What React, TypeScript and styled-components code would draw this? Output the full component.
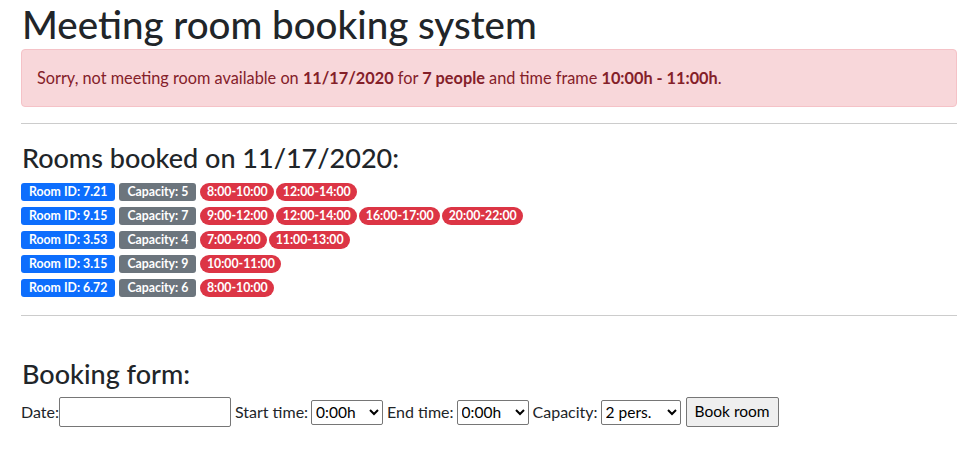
import { FC } from "react";
import styled, { createGlobalStyle } from "styled-components";

const Global = createGlobalStyle`
    body {
        margin: 0;
        font-family: "Lato", "Noto Sans", sans-serif;
        font-size: 16px;
        line-height: 1.5;
        color: #212529;
        background: #fff;
    }
`;

const Page = styled.div`
    padding: 0 13px 0 21px;
`;

const Title = styled.h1`
    margin: 0 0 1px 1px;
    font-size: 38.5px;
    font-weight: 500;
    line-height: 48px;
`;

const Alert = styled.div`
    background: #f8d7da;
    border: 1px solid #f5c2c7;
    color: #842029;
    border-radius: 4px;
    padding: 16px 15px;
    margin-bottom: 16px;
    font-size: 16.3px;
    line-height: 24px;
`;

const Rule = styled.hr`
    margin: 0;
    border: 0;
    border-top: 1px solid #ccc;
`;

const Section = styled.h3<{ $top: number; $bottom: number }>`
    margin: ${p => p.$top}px 0 ${p => p.$bottom}px 1px;
    font-size: 27px;
    font-weight: 500;
    line-height: 34px;
`;

const List = styled.div`
    display: flex;
    flex-direction: column;
    gap: 6px;
    margin-bottom: 18px;
`;

const Row = styled.div`
    display: flex;
    align-items: center;
`;

const Badge = styled.span<{ $bg: string; $pill?: boolean }>`
    display: inline-block;
    background: ${p => p.$bg};
    color: #fff;
    font-size: 12.3px;
    font-weight: 700;
    line-height: 1;
    padding: 3px ${p => (p.$pill ? "6.5px" : "8px")};
    height: 18px;
    box-sizing: border-box;
    border-radius: ${p => (p.$pill ? "9px" : "3px")};
    margin-right: ${p => (p.$pill ? "2px" : "4px")};
`;

const Form = styled.div`
    display: flex;
    align-items: center;
    font-size: 16px;
    white-space: nowrap;
`;

const Label = styled.label`
    margin-left: 4px;
    &:first-child { margin-left: 0; }
`;

const Input = styled.input`
    width: 172px;
    height: 30px;
    box-sizing: border-box;
    border: 1px solid #767676;
    border-radius: 2px;
    font: inherit;
`;

const Select = styled.select<{ $w: number }>`
    width: ${p => p.$w}px;
    height: 25px;
    margin-left: 3px;
    font: inherit;
    font-size: 15.5px;
    border: 1px solid #767676;
    border-radius: 2px;
    background: #fff;
    color: #000;
`;

const Button = styled.button`
    margin-left: 5px;
    height: 30px;
    padding: 0 8px;
    font: inherit;
    font-size: 15.5px;
    background: #efefef;
    border: 1px solid #767676;
    border-radius: 2px;
    color: #000;
`;

const rooms = [
    { id: "7.21", cap: 5, slots: ["8:00-10:00", "12:00-14:00"] },
    { id: "9.15", cap: 7, slots: ["9:00-12:00", "12:00-14:00", "16:00-17:00", "20:00-22:00"] },
    { id: "3.53", cap: 4, slots: ["7:00-9:00", "11:00-13:00"] },
    { id: "3.15", cap: 9, slots: ["10:00-11:00"] },
    { id: "6.72", cap: 6, slots: ["8:00-10:00"] },
];

const App: FC = () => {
    return (
        <Page>
            <Global />
            <Title>Meeting room booking system</Title>
            <Alert>
                Sorry, not meeting room available on <b>11/17/2020</b> for <b>7 people</b> and time frame <b>10:00h - 11:00h</b>.
            </Alert>
            <Rule />
            <Section $top={17} $bottom={8}>Rooms booked on 11/17/2020:</Section>
            <List>
                {rooms.map(r => (
                    <Row key={r.id}>
                        <Badge $bg="#0d6efd">Room ID: {r.id}</Badge>
                        <Badge $bg="#6c757d">Capacity: {r.cap}</Badge>
                        {r.slots.map(s => (
                            <Badge key={s} $bg="#dc3545" $pill>{s}</Badge>
                        ))}
                    </Row>
                ))}
            </List>
            <Rule />
            <Section $top={41} $bottom={6}>Booking form:</Section>
            <Form>
                <Label>Date:</Label>
                <Input type="text" />
                <Label>Start time:</Label>
                <Select $w={72}><option>0:00h</option></Select>
                <Label>End time:</Label>
                <Select $w={72}><option>0:00h</option></Select>
                <Label>Capacity:</Label>
                <Select $w={80}><option>2 pers.</option></Select>
                <Button>Book room</Button>
            </Form>
        </Page>
    );
};

export default App;
